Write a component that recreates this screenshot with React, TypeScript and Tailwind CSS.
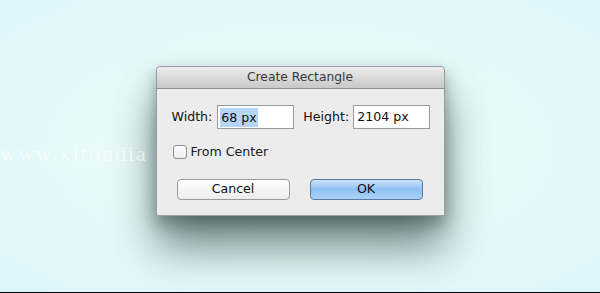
import React from "react";

export default function App() {
  const font = { fontFamily: '"DejaVu Sans", "Liberation Sans", sans-serif' };
  return (
    <div
      className="relative w-[600px] h-[293px] overflow-hidden border-b border-black bg-[radial-gradient(ellipse_at_center,#f0fcfd_0%,#e6f9fb_55%,#dcf6f9_100%)] flex justify-center"
      style={font}
    >
      <div className="mt-[66px] w-[289px] h-[150px] flex flex-col rounded-t-[4px] border border-[#9c9c9c] bg-[#ececec] shadow-[0_30px_44px_rgba(30,55,55,0.62),0_8px_16px_rgba(0,0,0,0.3)]">
        <div className="h-[22px] flex items-center justify-center rounded-t-[4px] border-b border-[#8e8e8e] bg-gradient-to-b from-[#ededed] to-[#c8c8c8] text-[12.3px] text-[#3a3a3a]">
          Create Rectangle
        </div>
        <div className="flex items-center mt-[16px] pl-[15px] text-[12.6px] text-[#111]">
          <span>Width:</span>
          <div className="ml-[5px] w-[77px] h-[24px] bg-white border border-[#9a9a9a] flex items-center pl-[2px]">
            <span className="bg-[#b6d5f8] px-[1px] leading-[19px]">68 px</span>
          </div>
          <span className="ml-[9px]">Height:</span>
          <div className="ml-[4px] w-[77px] h-[24px] bg-white border border-[#9a9a9a] flex items-center pl-[3px]">
            <span>2104 px</span>
          </div>
        </div>
        <div className="flex items-center mt-[14px] pl-[16px] text-[12.6px] text-[#222]">
          <div className="w-[14px] h-[14px] rounded-[3px] border border-[#8f8f8f] bg-gradient-to-b from-[#ffffff] to-[#ececec]" />
          <span className="ml-[4px]">From Center</span>
        </div>
        <div className="flex mt-[17px] pl-[20px] text-[12.6px] text-[#111]">
          <div className="w-[113px] h-[21px] rounded-[4px] border border-[#9a9a9a] bg-gradient-to-b from-[#ffffff] to-[#ededed] flex items-center justify-center">
            Cancel
          </div>
          <div className="ml-[20px] w-[113px] h-[21px] rounded-[4px] border border-[#5b79a3] bg-gradient-to-b from-[#cde3fa] via-[#8fc0f3] to-[#a9d2f8] flex items-center justify-center">
            OK
          </div>
        </div>
      </div>
      <div
        className="absolute left-0 top-[137px] text-[22px] text-white opacity-60 tracking-[2px]"
        style={{ fontFamily: '"Liberation Serif", serif' }}
      >
        www.xitondia
      </div>
    </div>
  );
}
